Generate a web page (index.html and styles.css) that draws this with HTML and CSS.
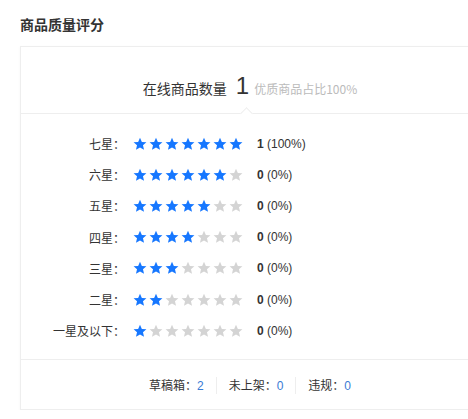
FILE: index.html
```html
<!DOCTYPE html>
<html lang="zh-CN">
  <head>
    <title>商品质量评分</title>
    <meta charset="UTF-8">
    <link rel="stylesheet" href="styles.css">
  </head>
  <body>
    <svg class="defs" width="0" height="0">
      <symbol id="star" viewBox="0 0 24 24">
        <path d="M12 1.2l3.2 7.2 7.8.7-5.9 5.2 1.8 7.7L12 18l-6.9 4 1.8-7.7L1 9.1l7.8-.7z"/>
      </symbol>
    </svg>

    <main class="page">
      <h2 class="title">商品质量评分</h2>

      <section class="card">
        <div class="summary">
          <span class="summary-label">在线商品数量</span>
          <span class="summary-count">1</span>
          <span class="summary-note">优质商品占比100%</span>
        </div>

        <ul class="ratings">
          <li class="rating">
            <span class="rating-label">七星：</span>
            <span class="stars">
              <svg class="star on"><use href="#star"/></svg>
              <svg class="star on"><use href="#star"/></svg>
              <svg class="star on"><use href="#star"/></svg>
              <svg class="star on"><use href="#star"/></svg>
              <svg class="star on"><use href="#star"/></svg>
              <svg class="star on"><use href="#star"/></svg>
              <svg class="star on"><use href="#star"/></svg>
            </span>
            <span class="rating-value"><b>1</b> (100%)</span>
          </li>
          <li class="rating">
            <span class="rating-label">六星：</span>
            <span class="stars">
              <svg class="star on"><use href="#star"/></svg>
              <svg class="star on"><use href="#star"/></svg>
              <svg class="star on"><use href="#star"/></svg>
              <svg class="star on"><use href="#star"/></svg>
              <svg class="star on"><use href="#star"/></svg>
              <svg class="star on"><use href="#star"/></svg>
              <svg class="star"><use href="#star"/></svg>
            </span>
            <span class="rating-value"><b>0</b> (0%)</span>
          </li>
          <li class="rating">
            <span class="rating-label">五星：</span>
            <span class="stars">
              <svg class="star on"><use href="#star"/></svg>
              <svg class="star on"><use href="#star"/></svg>
              <svg class="star on"><use href="#star"/></svg>
              <svg class="star on"><use href="#star"/></svg>
              <svg class="star on"><use href="#star"/></svg>
              <svg class="star"><use href="#star"/></svg>
              <svg class="star"><use href="#star"/></svg>
            </span>
            <span class="rating-value"><b>0</b> (0%)</span>
          </li>
          <li class="rating">
            <span class="rating-label">四星：</span>
            <span class="stars">
              <svg class="star on"><use href="#star"/></svg>
              <svg class="star on"><use href="#star"/></svg>
              <svg class="star on"><use href="#star"/></svg>
              <svg class="star on"><use href="#star"/></svg>
              <svg class="star"><use href="#star"/></svg>
              <svg class="star"><use href="#star"/></svg>
              <svg class="star"><use href="#star"/></svg>
            </span>
            <span class="rating-value"><b>0</b> (0%)</span>
          </li>
          <li class="rating">
            <span class="rating-label">三星：</span>
            <span class="stars">
              <svg class="star on"><use href="#star"/></svg>
              <svg class="star on"><use href="#star"/></svg>
              <svg class="star on"><use href="#star"/></svg>
              <svg class="star"><use href="#star"/></svg>
              <svg class="star"><use href="#star"/></svg>
              <svg class="star"><use href="#star"/></svg>
              <svg class="star"><use href="#star"/></svg>
            </span>
            <span class="rating-value"><b>0</b> (0%)</span>
          </li>
          <li class="rating">
            <span class="rating-label">二星：</span>
            <span class="stars">
              <svg class="star on"><use href="#star"/></svg>
              <svg class="star on"><use href="#star"/></svg>
              <svg class="star"><use href="#star"/></svg>
              <svg class="star"><use href="#star"/></svg>
              <svg class="star"><use href="#star"/></svg>
              <svg class="star"><use href="#star"/></svg>
              <svg class="star"><use href="#star"/></svg>
            </span>
            <span class="rating-value"><b>0</b> (0%)</span>
          </li>
          <li class="rating">
            <span class="rating-label">一星及以下：</span>
            <span class="stars">
              <svg class="star on"><use href="#star"/></svg>
              <svg class="star"><use href="#star"/></svg>
              <svg class="star"><use href="#star"/></svg>
              <svg class="star"><use href="#star"/></svg>
              <svg class="star"><use href="#star"/></svg>
              <svg class="star"><use href="#star"/></svg>
              <svg class="star"><use href="#star"/></svg>
            </span>
            <span class="rating-value"><b>0</b> (0%)</span>
          </li>
        </ul>

        <div class="stats">
          <span class="stat">草稿箱：<a href="">2</a></span>
          <span class="stat">未上架：<a href="">0</a></span>
          <span class="stat">违规：<a href="">0</a></span>
        </div>
      </section>
    </main>
  </body>
</html>
```

FILE: styles.css
```css
/* General styles */

html {
  font-family: "Noto Sans CJK SC", "Liberation Sans", sans-serif;
  font-size: 12px;
  color: #333;
}

body {
  margin: 0;
  overflow: hidden;
  background-color: #fff;
}

.defs {
  position: absolute;
}

.page {
  padding: 14px 0 0 20px;
}

.title {
  margin: 0;
  font-size: 14px;
  font-weight: bold;
  line-height: 20px;
  color: #333;
}

/* Card */

.card {
  width: 460px;
  height: 364px;
  box-sizing: border-box;
  margin-top: 12px;
  border: 1px solid #eee;
  box-shadow: 0 1px 3px rgba(0, 0, 0, 0.04);
  display: flex;
  flex-direction: column;
}

.summary {
  position: relative;
  height: 67px;
  display: flex;
  justify-content: center;
  align-items: baseline;
  padding-top: 25px;
  box-sizing: border-box;
  border-bottom: 1px solid #eee;
}

/* little notch pointing up into the summary */
.summary::after {
  content: "";
  position: absolute;
  left: 221px;
  bottom: -5px;
  width: 8px;
  height: 8px;
  background-color: #fff;
  border-top: 1px solid #eee;
  border-left: 1px solid #eee;
  transform: rotate(45deg);
}

.summary-label {
  font-size: 14px;
  color: #333;
}

.summary-count {
  margin: 0 5px 0 9px;
  font-family: "Liberation Sans", sans-serif;
  font-size: 24px;
  font-weight: 300;
  color: #333;
}

.summary-note {
  font-size: 12px;
  color: #bbb;
}

/* Ratings */

.ratings {
  list-style: none;
  margin: 0;
  padding: 14px 0 0 23px;
  flex: 1;
  border-bottom: 1px solid #eee;
}

.rating {
  display: flex;
  align-items: center;
  height: 31.2px;
}

.rating-label {
  width: 81px;
  text-align: right;
  white-space: nowrap;
}

.stars {
  display: flex;
  gap: 2px;
  margin-left: 8px;
}

.star {
  width: 14px;
  height: 14px;
  fill: #d4d4d4;
}

.star.on {
  fill: #1677ff;
}

.rating-value {
  margin-left: 14px;
  font-family: "Liberation Sans", sans-serif;
  font-size: 12px;
  color: #333;
}

/* Stats */

.stats {
  height: 48px;
  display: flex;
  justify-content: center;
  align-items: center;
  padding-top: 1px;
}

.stat {
  padding: 0 12px;
  line-height: 16px;
  border-left: 1px solid #eee;
}

.stat:first-child {
  border-left: none;
}

.stat a {
  font-family: "Liberation Sans", sans-serif;
  color: #3a7bd5;
  text-decoration: none;
}
```
